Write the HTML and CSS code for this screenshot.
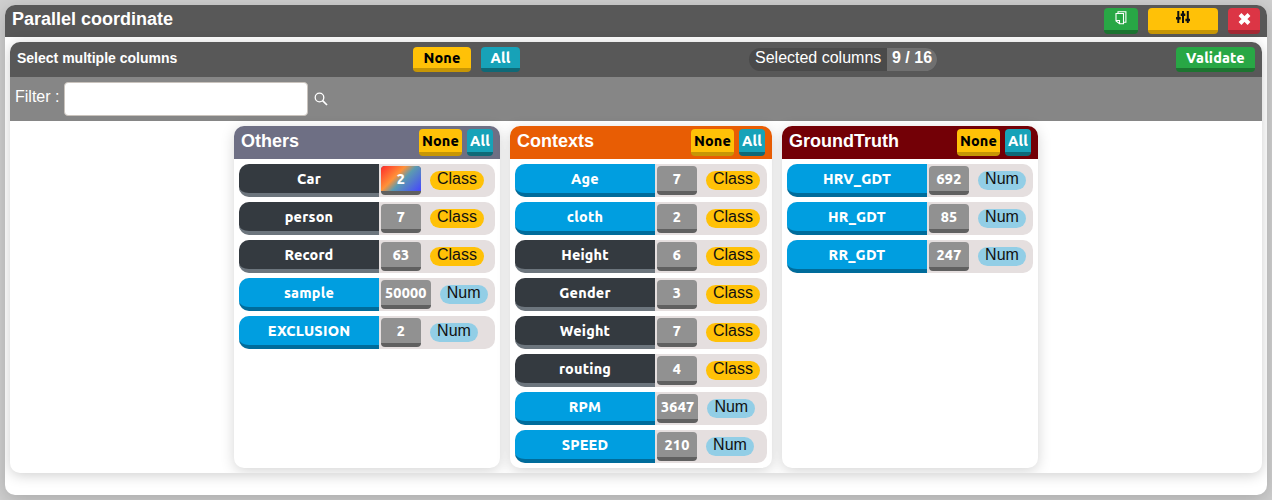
FILE: index.html
```
<!DOCTYPE html>
<html lang="en">
<head>
<meta charset="utf-8">
<title>Parallel coordinate</title>
<link rel="stylesheet" href="styles.css">
</head>
<body>
<main class="window">
  <header class="window-header">
    <h1 class="title">Parallel coordinate</h1>
    <button class="btn green tool copy" aria-label="Copy"><svg width="12" height="14" viewBox="0 0 12 14" fill="none" stroke="#fff" stroke-width="1.1"><path d="M1 2.5H8.5V12.8H4.5L1 10ZM1 9.5H4.5V12.8M3 2.5V.8H10.9V11.3H8.5"/></svg></button>
    <button class="btn yellow tool sliders" aria-label="Settings"><svg width="14" height="13" viewBox="0 0 14 13" fill="none" stroke="#111" stroke-width="2"><path d="M2.3 0V12M7 0V12M11.8 0V12"/><path stroke-width="2.5" d="M0 7.2H4.7M4.7 3.8H9.3M9.4 9H14"/></svg></button>
    <button class="btn red tool close" aria-label="Close"><svg width="13" height="12" viewBox="0 0 13 12" stroke="#fff" stroke-width="4"><path d="M2 1.5L11 10.5M11 1.5L2 10.5"/></svg></button>
  </header>
  <section class="panel">
    <div class="panel-header">
      <h2 class="subtitle">Select multiple columns</h2>
      <button class="btn yellow main-none">None</button>
      <button class="btn cyan main-all">All</button>
      <div class="counter"><span class="counter-label">Selected columns</span><b class="counter-value">9 / 16</b></div>
      <button class="btn green validate">Validate</button>
    </div>
    <div class="filter">
      <label class="filter-label" for="filter">Filter :</label>
      <input class="filter-input" id="filter" type="text">
      <svg class="search" width="14" height="14" viewBox="0 0 14 14" fill="none" stroke="#fff" stroke-width="1.3"><circle cx="5.5" cy="5.5" r="4.3"/><path stroke-width="1.7" d="M8.6 8.6L13 13"/></svg>
    </div>
    <div class="groups">
      <section class="group others">
        <div class="group-header"><h3 class="group-title">Others</h3><button class="btn yellow none">None</button><button class="btn cyan all">All</button></div>
        <div class="rows">
          <div class="row"><span class="name">Car</span><span class="count rainbow">2</span><span class="tag class">Class</span></div>
          <div class="row"><span class="name">person</span><span class="count">7</span><span class="tag class">Class</span></div>
          <div class="row"><span class="name">Record</span><span class="count">63</span><span class="tag class">Class</span></div>
          <div class="row"><span class="name on">sample</span><span class="count">50000</span><span class="tag num">Num</span></div>
          <div class="row"><span class="name on">EXCLUSION</span><span class="count">2</span><span class="tag num">Num</span></div>
        </div>
      </section>
      <section class="group contexts">
        <div class="group-header"><h3 class="group-title">Contexts</h3><button class="btn yellow none">None</button><button class="btn cyan all">All</button></div>
        <div class="rows">
          <div class="row"><span class="name on">Age</span><span class="count">7</span><span class="tag class">Class</span></div>
          <div class="row"><span class="name on">cloth</span><span class="count">2</span><span class="tag class">Class</span></div>
          <div class="row"><span class="name">Height</span><span class="count">6</span><span class="tag class">Class</span></div>
          <div class="row"><span class="name">Gender</span><span class="count">3</span><span class="tag class">Class</span></div>
          <div class="row"><span class="name">Weight</span><span class="count">7</span><span class="tag class">Class</span></div>
          <div class="row"><span class="name">routing</span><span class="count">4</span><span class="tag class">Class</span></div>
          <div class="row"><span class="name on">RPM</span><span class="count">3647</span><span class="tag num">Num</span></div>
          <div class="row"><span class="name on">SPEED</span><span class="count">210</span><span class="tag num">Num</span></div>
        </div>
      </section>
      <section class="group truth">
        <div class="group-header"><h3 class="group-title">GroundTruth</h3><button class="btn yellow none">None</button><button class="btn cyan all">All</button></div>
        <div class="rows">
          <div class="row"><span class="name on">HRV_GDT</span><span class="count">692</span><span class="tag num">Num</span></div>
          <div class="row"><span class="name on">HR_GDT</span><span class="count">85</span><span class="tag num">Num</span></div>
          <div class="row"><span class="name on">RR_GDT</span><span class="count">247</span><span class="tag num">Num</span></div>
        </div>
      </section>
    </div>
  </section>
</main>
</body>
</html>
```
FILE: styles.css
```
* { box-sizing: border-box; }
body {
  margin: 0;
  padding: 5px;
  height: 500px;
  overflow: hidden;
  background: #d0d0d0;
  font: 16px/24px "Liberation Sans", Arial, sans-serif;
}
h1, h2, h3 { margin: 0; color: #fff; font-weight: bold; }
.window {
  height: 490px;
  overflow: hidden;
  background: #fff;
  border-radius: 10px;
  box-shadow: 0 4px 20px rgba(0, 0, 0, .2);
}
.window-header {
  display: flex;
  align-items: flex-start;
  height: 32px;
  padding: 3px 7px;
  background: #585858;
}
.title { flex: 1; font-size: 18px; line-height: 22px; }
.btn {
  flex: none;
  display: flex;
  justify-content: center;
  padding: 0;
  border: 0;
  border-bottom: 4px solid;
  border-radius: 4px;
  font: 800 14.4px/22px Ubuntu, "Noto Sans", sans-serif;
  letter-spacing: .15px;
}
.green { color: #fff; background: #28a745; border-color: #1c7430; }
.yellow { color: #000; background: #ffc107; border-color: #c79605; }
.cyan { color: #fff; background: #17a2b8; border-color: #0f6977; }
.red { background: #dc3545; border-color: #a52834; }
.tool { height: 26px; margin-left: 10px; }
.tool svg { margin-top: 3px; }
.copy { width: 34px; }
.sliders { width: 70px; }
.close { width: 32px; }
.close svg { margin-top: 5px; }
.panel {
  height: 431px;
  margin: 5px;
  overflow: hidden;
  border-radius: 10px;
  background: #fff;
  box-shadow: 0 2px 14px rgba(0, 0, 0, .2);
}
.panel-header {
  display: flex;
  height: 35px;
  padding: 5px 7px;
  background: #585858;
}
.subtitle { width: 396px; font-size: 14px; line-height: 22px; }
.panel-header .btn { height: 25px; }
.main-none { width: 58px; }
.main-all { width: 39px; margin-left: 10px; }
.counter {
  display: flex;
  width: 188px;
  height: 23px;
  margin: 1px 0 0 229px;
  border-radius: 12px;
  overflow: hidden;
  color: #fff;
  background: #4a4a4a;
  line-height: 20px;
}
.counter-label { width: 138px; padding-left: 6px; white-space: nowrap; }
.counter-value { flex: 1; padding-left: 5px; background: #707070; white-space: nowrap; }
.validate { width: 79px; margin-left: auto; }
.filter {
  display: flex;
  align-items: flex-start;
  height: 44px;
  padding: 5px;
  background: #868686;
  color: #fff;
}
.filter-label { width: 49px; line-height: 30px; white-space: nowrap; }
.filter-input {
  width: 244px;
  height: 34px;
  border: 1px solid #c9c3bd;
  border-radius: 4px;
  background: #fff;
}
.search { margin: 10px 0 0 6px; }
.groups {
  display: flex;
  justify-content: center;
  gap: 10px;
  height: 352px;
  padding: 5px 0;
}
.group {
  border-radius: 10px;
  overflow: hidden;
  background: #fff;
  box-shadow: 0 3px 14px rgba(0, 0, 0, .17);
}
.others { width: 266px; }
.contexts { width: 262px; }
.truth { width: 256px; }
.group-header { display: flex; height: 33px; padding: 3px 7px; }
.others .group-header { background: #6e6f84; }
.contexts .group-header { background: #e85d04; }
.truth .group-header { background: #730006; }
.group-title { flex: 1; font-size: 18px; line-height: 24px; }
.group-header .btn { height: 27px; line-height: 24px; }
.none { width: 43px; }
.all { width: 26px; margin-left: 5px; }
.rows { display: flex; flex-direction: column; gap: 5px; padding: 5px; }
.row {
  display: flex;
  height: 33px;
  border-radius: 10px;
  background: #e5dfdf;
}
.name, .count {
  color: #fff;
  text-align: center;
  font: 800 14.4px/30px Ubuntu, "Noto Sans", sans-serif;
  letter-spacing: .2px;
}
.name {
  width: 140px;
  border-bottom: 4px solid #6c757d;
  border-radius: 10px 0 0 10px;
  background: #343a40;
}
.on { background: #009ee0; border-color: #006c9b; }
.count {
  min-width: 40px;
  height: 29px;
  margin: 2px 9px 0 2px;
  padding: 0 4px;
  border-bottom: 4px solid #606060;
  border-radius: 4px;
  background: #919191;
  line-height: 26px;
}
.rainbow { background: linear-gradient(135deg, #ff2a2a, #ff9138 38%, #5c9bb0 55%, #4545ff) padding-box, #606060; }
.tag {
  height: 19px;
  margin-top: 7px;
  border-radius: 10px;
  color: #111;
  text-align: center;
  line-height: 16px;
}
.class { width: 54px; background: #ffc107; }
.num { width: 48px; background: #92cee6; }
```
